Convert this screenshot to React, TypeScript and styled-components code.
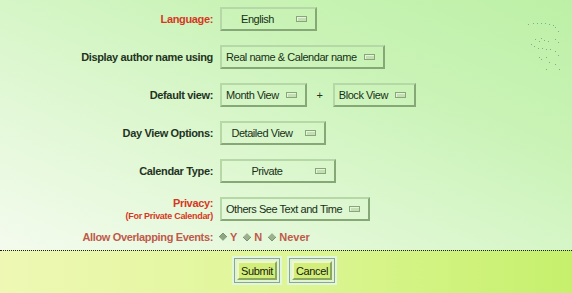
import React from "react";
import styled, { createGlobalStyle } from "styled-components";

const GlobalStyle = createGlobalStyle`
  html, body {
    margin: 0;
    padding: 0;
    overflow: hidden;
  }
  body {
    font-family: "Liberation Sans", Arial, sans-serif;
  }
`;

const Page = styled.div`
  width: 572px;
  height: 293px;
  display: flex;
  flex-direction: column;
`;

const Top = styled.div`
  position: relative;
  height: 250px;
  background: linear-gradient(to top right, #f4fbee 0%, #dcf7cf 40%, #c9f3b6 70%, #bdf0a6 100%);
`;

const Form = styled.div`
  display: grid;
  grid-template-columns: 213px auto;
  grid-auto-rows: 38px;
  column-gap: 7px;
  align-items: center;
  justify-items: start;
`;

const Label = styled.div<{ $tone?: "red" | "muted" }>`
  justify-self: end;
  font-size: 11px;
  font-weight: bold;
  letter-spacing: -0.35px;
  white-space: nowrap;
  color: ${(p) =>
    p.$tone === "red" ? "#d6381f" : p.$tone === "muted" ? "#bf5a4a" : "#1f331f"};
`;

const LabelStack = styled.div`
  justify-self: end;
  display: flex;
  flex-direction: column;
  align-items: flex-end;
  line-height: 12px;
`;

const SubNote = styled.span`
  font-size: 9px;
  font-weight: bold;
  letter-spacing: -0.3px;
  color: #d6381f;
  margin-top: 1px;
`;

const Controls = styled.div`
  display: flex;
  align-items: center;
`;

const Plus = styled.span`
  width: 26px;
  text-align: center;
  font-size: 11px;
  color: #1f331f;
`;

const Select = styled.div<{ $width?: number }>`
  box-sizing: border-box;
  height: 24px;
  width: ${(p) => (p.$width ? `${p.$width}px` : "auto")};
  display: flex;
  align-items: center;
  gap: 7px;
  padding: 0 8px 0 4px;
  border: 2px solid;
  border-color: #b6d7a6 #86a877 #86a877 #b6d7a6;
  font-size: 11px;
  letter-spacing: -0.45px;
  color: #163016;
  white-space: nowrap;
`;

const SelectText = styled.span<{ $center?: boolean }>`
  flex: ${(p) => (p.$center ? 1 : "none")};
  text-align: ${(p) => (p.$center ? "center" : "left")};
`;

const Indicator = styled.span`
  box-sizing: border-box;
  width: 11px;
  height: 6px;
  border: 1px solid #86a877;
  background: #c6deb6;
  box-shadow: inset 1px 1px 0 #e6f4de;
`;

const AllowRow = styled.div`
  display: grid;
  grid-template-columns: 213px auto;
  column-gap: 6px;
  align-items: center;
  height: 18px;
  padding-bottom: 4px;
`;

const Radios = styled.div`
  display: flex;
  align-items: center;
  gap: 6px;
`;

const Radio = styled.label`
  display: flex;
  align-items: center;
  gap: 3px;
  font-size: 11px;
  font-weight: bold;
  color: #bf5a4a;
`;

const Bottom = styled.div`
  flex: 1;
  border-top: 1px dotted #1c1c1c;
  background: linear-gradient(to right, #eef8b4 0%, #e0f69a 45%, #c6f06c 100%);
  display: flex;
  align-items: flex-start;
  gap: 5px;
  padding: 5px 0 0 232px;
`;

const ButtonFrame = styled.div`
  border: 2px solid #e2f6de;
  display: flex;
`;

const ButtonWell = styled.div`
  border: 1px solid #8aa890;
  background: #e0f4d4;
  padding: 2px 2px;
  display: flex;
`;

const Button = styled.button`
  box-sizing: border-box;
  height: 19px;
  width: 40px;
  padding: 0;
  border: 2px solid;
  border-color: #eef8c6 #8aa85e #8aa85e #eef8c6;
  background: #d4ee7c;
  font-family: "Liberation Sans", Arial, sans-serif;
  font-size: 11px;
  letter-spacing: -0.4px;
  color: #141d0e;
`;

const Decoration = styled.svg`
  position: absolute;
  top: 22px;
  right: 10px;
`;

const Diamond = ({ selected }: { selected?: boolean }) => (
  <svg width="8" height="8" viewBox="0 0 8 8">
    <polygon points="4,0 8,4 4,8 0,4" fill={selected ? "#8ea682" : "#9cb28f"} />
    <polyline
      points="0,4 4,0 8,4"
      fill="none"
      stroke={selected ? "#7a9470" : "#c6dabc"}
      strokeWidth="1"
    />
    <polyline
      points="0,4 4,8 8,4"
      fill="none"
      stroke={selected ? "#c6dabc" : "#7a9470"}
      strokeWidth="1"
    />
  </svg>
);

const dots: [number, number][] = [
  [0, 2], [5, 1], [9, 1], [13, 1], [17, 1], [21, 2], [25, 3], [27, 5], [30, 9],
  [7, 17], [11, 19], [13, 16], [16, 18], [20, 19], [27, 17], [30, 20],
  [3, 22], [6, 24], [10, 26], [14, 26], [18, 27], [22, 27],
  [27, 29], [30, 33], [11, 35], [13, 37], [18, 35], [21, 40], [27, 42], [31, 47], [18, 47],
];

const App = (): JSX.Element => {
  return (
    <>
      <GlobalStyle />
      <Page>
        <Top>
          <Decoration width="34" height="50" viewBox="0 0 34 50">
            {dots.map(([x, y]) => (
              <rect key={`${x}-${y}`} x={x} y={y} width="1" height="1" fill="#8ea886" />
            ))}
          </Decoration>
          <Form>
            <Label $tone="red">Language:</Label>
            <Select $width={97}>
              <SelectText $center>English</SelectText>
              <Indicator />
            </Select>

            <Label>Display author name using</Label>
            <Select>
              <SelectText>Real name &amp; Calendar name</SelectText>
              <Indicator />
            </Select>

            <Label>Default view:</Label>
            <Controls>
              <Select>
                <SelectText>Month View</SelectText>
                <Indicator />
              </Select>
              <Plus>+</Plus>
              <Select>
                <SelectText>Block View</SelectText>
                <Indicator />
              </Select>
            </Controls>

            <Label>Day View Options:</Label>
            <Select $width={106}>
              <SelectText $center>Detailed View</SelectText>
              <Indicator />
            </Select>

            <Label>Calendar Type:</Label>
            <Select $width={116}>
              <SelectText $center>Private</SelectText>
              <Indicator />
            </Select>

            <LabelStack>
              <Label $tone="red">Privacy:</Label>
              <SubNote>(For Private Calendar)</SubNote>
            </LabelStack>
            <Select>
              <SelectText>Others See Text and Time</SelectText>
              <Indicator />
            </Select>
          </Form>
          <AllowRow>
            <Label $tone="muted">Allow Overlapping Events:</Label>
            <Radios>
              <Radio>
                <Diamond selected />Y
              </Radio>
              <Radio>
                <Diamond />N
              </Radio>
              <Radio>
                <Diamond />Never
              </Radio>
            </Radios>
          </AllowRow>
        </Top>
        <Bottom>
          <ButtonFrame>
            <ButtonWell>
              <Button>Submit</Button>
            </ButtonWell>
          </ButtonFrame>
          <ButtonFrame>
            <ButtonWell>
              <Button>Cancel</Button>
            </ButtonWell>
          </ButtonFrame>
        </Bottom>
      </Page>
    </>
  );
};

export default App;
